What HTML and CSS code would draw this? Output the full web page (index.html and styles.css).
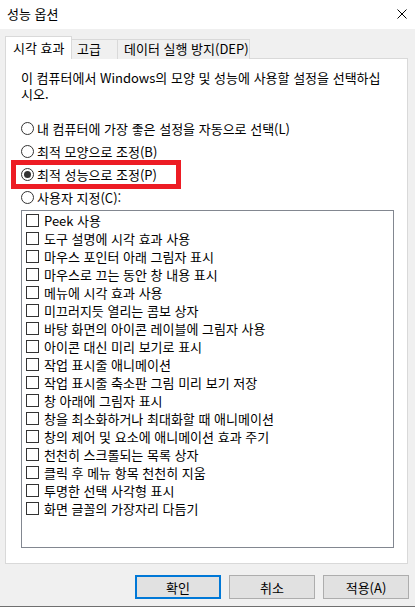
FILE: index.html
```html
<!DOCTYPE html>
<html lang="ko">
<head>
<meta charset="utf-8">
<title>성능 옵션</title>
<link rel="stylesheet" href="styles.css">
</head>
<body>
<div class="window">
  <div class="titlebar">
    <span class="title">성능 옵션</span>
    <svg class="close" width="10" height="10" viewBox="0 0 10 10"><path d="M0.5 0.5 L9.5 9.5 M9.5 0.5 L0.5 9.5" stroke="#000" stroke-width="1" fill="none"/></svg>
  </div>
  <div class="tabs">
    <div class="tab tab-active">시각 효과</div>
    <div class="tab tab-adv">고급</div>
    <div class="tab tab-dep">데이터 실행 방지(DEP)</div>
  </div>
  <div class="panel">
    <p class="desc">이 컴퓨터에서 Windows의 모양 및 성능에 사용할 설정을 선택하십시오.</p>
    <div class="radios">
      <div class="radio-row"><span class="radio"></span><span>내 컴퓨터에 가장 좋은 설정을 자동으로 선택(L)</span></div>
      <div class="radio-row"><span class="radio"></span><span>최적 모양으로 조정(B)</span></div>
      <div class="radio-row highlight"><span class="radio checked"></span><span>최적 성능으로 조정(P)</span><span class="redbox"></span></div>
      <div class="radio-row"><span class="radio"></span><span>사용자 지정(C):</span></div>
    </div>
    <div class="listbox">
      <div class="check-row"><span class="box"></span><span>Peek 사용</span></div>
      <div class="check-row"><span class="box"></span><span>도구 설명에 시각 효과 사용</span></div>
      <div class="check-row"><span class="box"></span><span>마우스 포인터 아래 그림자 표시</span></div>
      <div class="check-row"><span class="box"></span><span>마우스로 끄는 동안 창 내용 표시</span></div>
      <div class="check-row"><span class="box"></span><span>메뉴에 시각 효과 사용</span></div>
      <div class="check-row"><span class="box"></span><span>미끄러지듯 열리는 콤보 상자</span></div>
      <div class="check-row"><span class="box"></span><span>바탕 화면의 아이콘 레이블에 그림자 사용</span></div>
      <div class="check-row"><span class="box"></span><span>아이콘 대신 미리 보기로 표시</span></div>
      <div class="check-row"><span class="box"></span><span>작업 표시줄 애니메이션</span></div>
      <div class="check-row"><span class="box"></span><span>작업 표시줄 축소판 그림 미리 보기 저장</span></div>
      <div class="check-row"><span class="box"></span><span>창 아래에 그림자 표시</span></div>
      <div class="check-row"><span class="box"></span><span>창을 최소화하거나 최대화할 때 애니메이션</span></div>
      <div class="check-row"><span class="box"></span><span>창의 제어 및 요소에 애니메이션 효과 주기</span></div>
      <div class="check-row"><span class="box"></span><span>천천히 스크롤되는 목록 상자</span></div>
      <div class="check-row"><span class="box"></span><span>클릭 후 메뉴 항목 천천히 지움</span></div>
      <div class="check-row"><span class="box"></span><span>투명한 선택 사각형 표시</span></div>
      <div class="check-row"><span class="box"></span><span>화면 글꼴의 가장자리 다듬기</span></div>
    </div>
  </div>
  <div class="buttons">
    <button class="btn btn-default">확인</button>
    <button class="btn">취소</button>
    <button class="btn">적용(A)</button>
  </div>
</div>
</body>
</html>
```

FILE: styles.css
```css
* { box-sizing: border-box; }
html, body { margin: 0; padding: 0; }
body {
  background: #f0f0f0;
  font-family: "Noto Sans CJK KR", "Malgun Gothic", sans-serif;
  font-size: 13px;
  color: #000;
}
.window {
  width: 415px;
  height: 607px;
  display: flex;
  flex-direction: column;
  border-bottom: 1px solid #6f6f6f;
}
.titlebar {
  height: 29px;
  background: #fff;
  display: flex;
  align-items: center;
  justify-content: space-between;
  padding: 0 8px 2px 7px;
}
.title { line-height: 16px; }
.close { display: block; }
.tabs {
  display: flex;
  align-items: flex-end;
  height: 23px;
  margin-top: 7px;
  padding-left: 5px;
  position: relative;
  z-index: 1;
}
.tab {
  height: 20px;
  line-height: 18px;
  border: 1px solid #d9d9d9;
  border-bottom: none;
  background: #f0f0f0;
  padding-left: 5px;
  white-space: nowrap;
}
.tab-active {
  width: 67px;
  height: 23px;
  line-height: 21px;
  background: #fff;
  padding-left: 7px;
}
.tab-adv { width: 46px; border-left: none; }
.tab-dep { width: 132px; border-left: none; padding-left: 6px; }
.panel {
  margin: -1px 7px 0 5px;
  background: #fff;
  border: 1px solid #d9d9d9;
  padding: 11px 0 15px 15px;
}
.desc {
  margin: 0;
  width: 362px;
  line-height: 16px;
}
.radios {
  margin-top: 15px;
}
.radio-row {
  height: 23px;
  display: flex;
  align-items: center;
  position: relative;
}
.radio {
  width: 13px;
  height: 13px;
  border: 1px solid #333;
  border-radius: 50%;
  background: #fff;
  margin-right: 3px;
  flex: none;
  display: flex;
  align-items: center;
  justify-content: center;
}
.radio.checked::after {
  content: "";
  width: 7px;
  height: 7px;
  border-radius: 50%;
  background: #333;
}
.redbox {
  position: absolute;
  left: -10px;
  top: -3px;
  width: 170px;
  height: 29px;
  border: 5px solid #ed1c24;
}
.listbox {
  margin-top: 1px;
  width: 373px;
  height: 338px;
  border: 1px solid #828790;
  padding: 0 0 0 4px;
}
.check-row {
  height: 18px;
  display: flex;
  align-items: center;
}
.box {
  width: 13px;
  height: 13px;
  border: 1px solid #333;
  background: #fff;
  margin-right: 5px;
  flex: none;
}
.buttons {
  display: flex;
  justify-content: flex-end;
  gap: 8px;
  margin-top: 11px;
  padding-right: 6px;
}
.btn {
  width: 86px;
  height: 24px;
  background: #e1e1e1;
  border: 1px solid #adadad;
  font-family: inherit;
  font-size: 13px;
  color: #000;
  padding: 0;
  margin: 0;
}
.btn-default {
  border: 2px solid #0078d7;
}
```
